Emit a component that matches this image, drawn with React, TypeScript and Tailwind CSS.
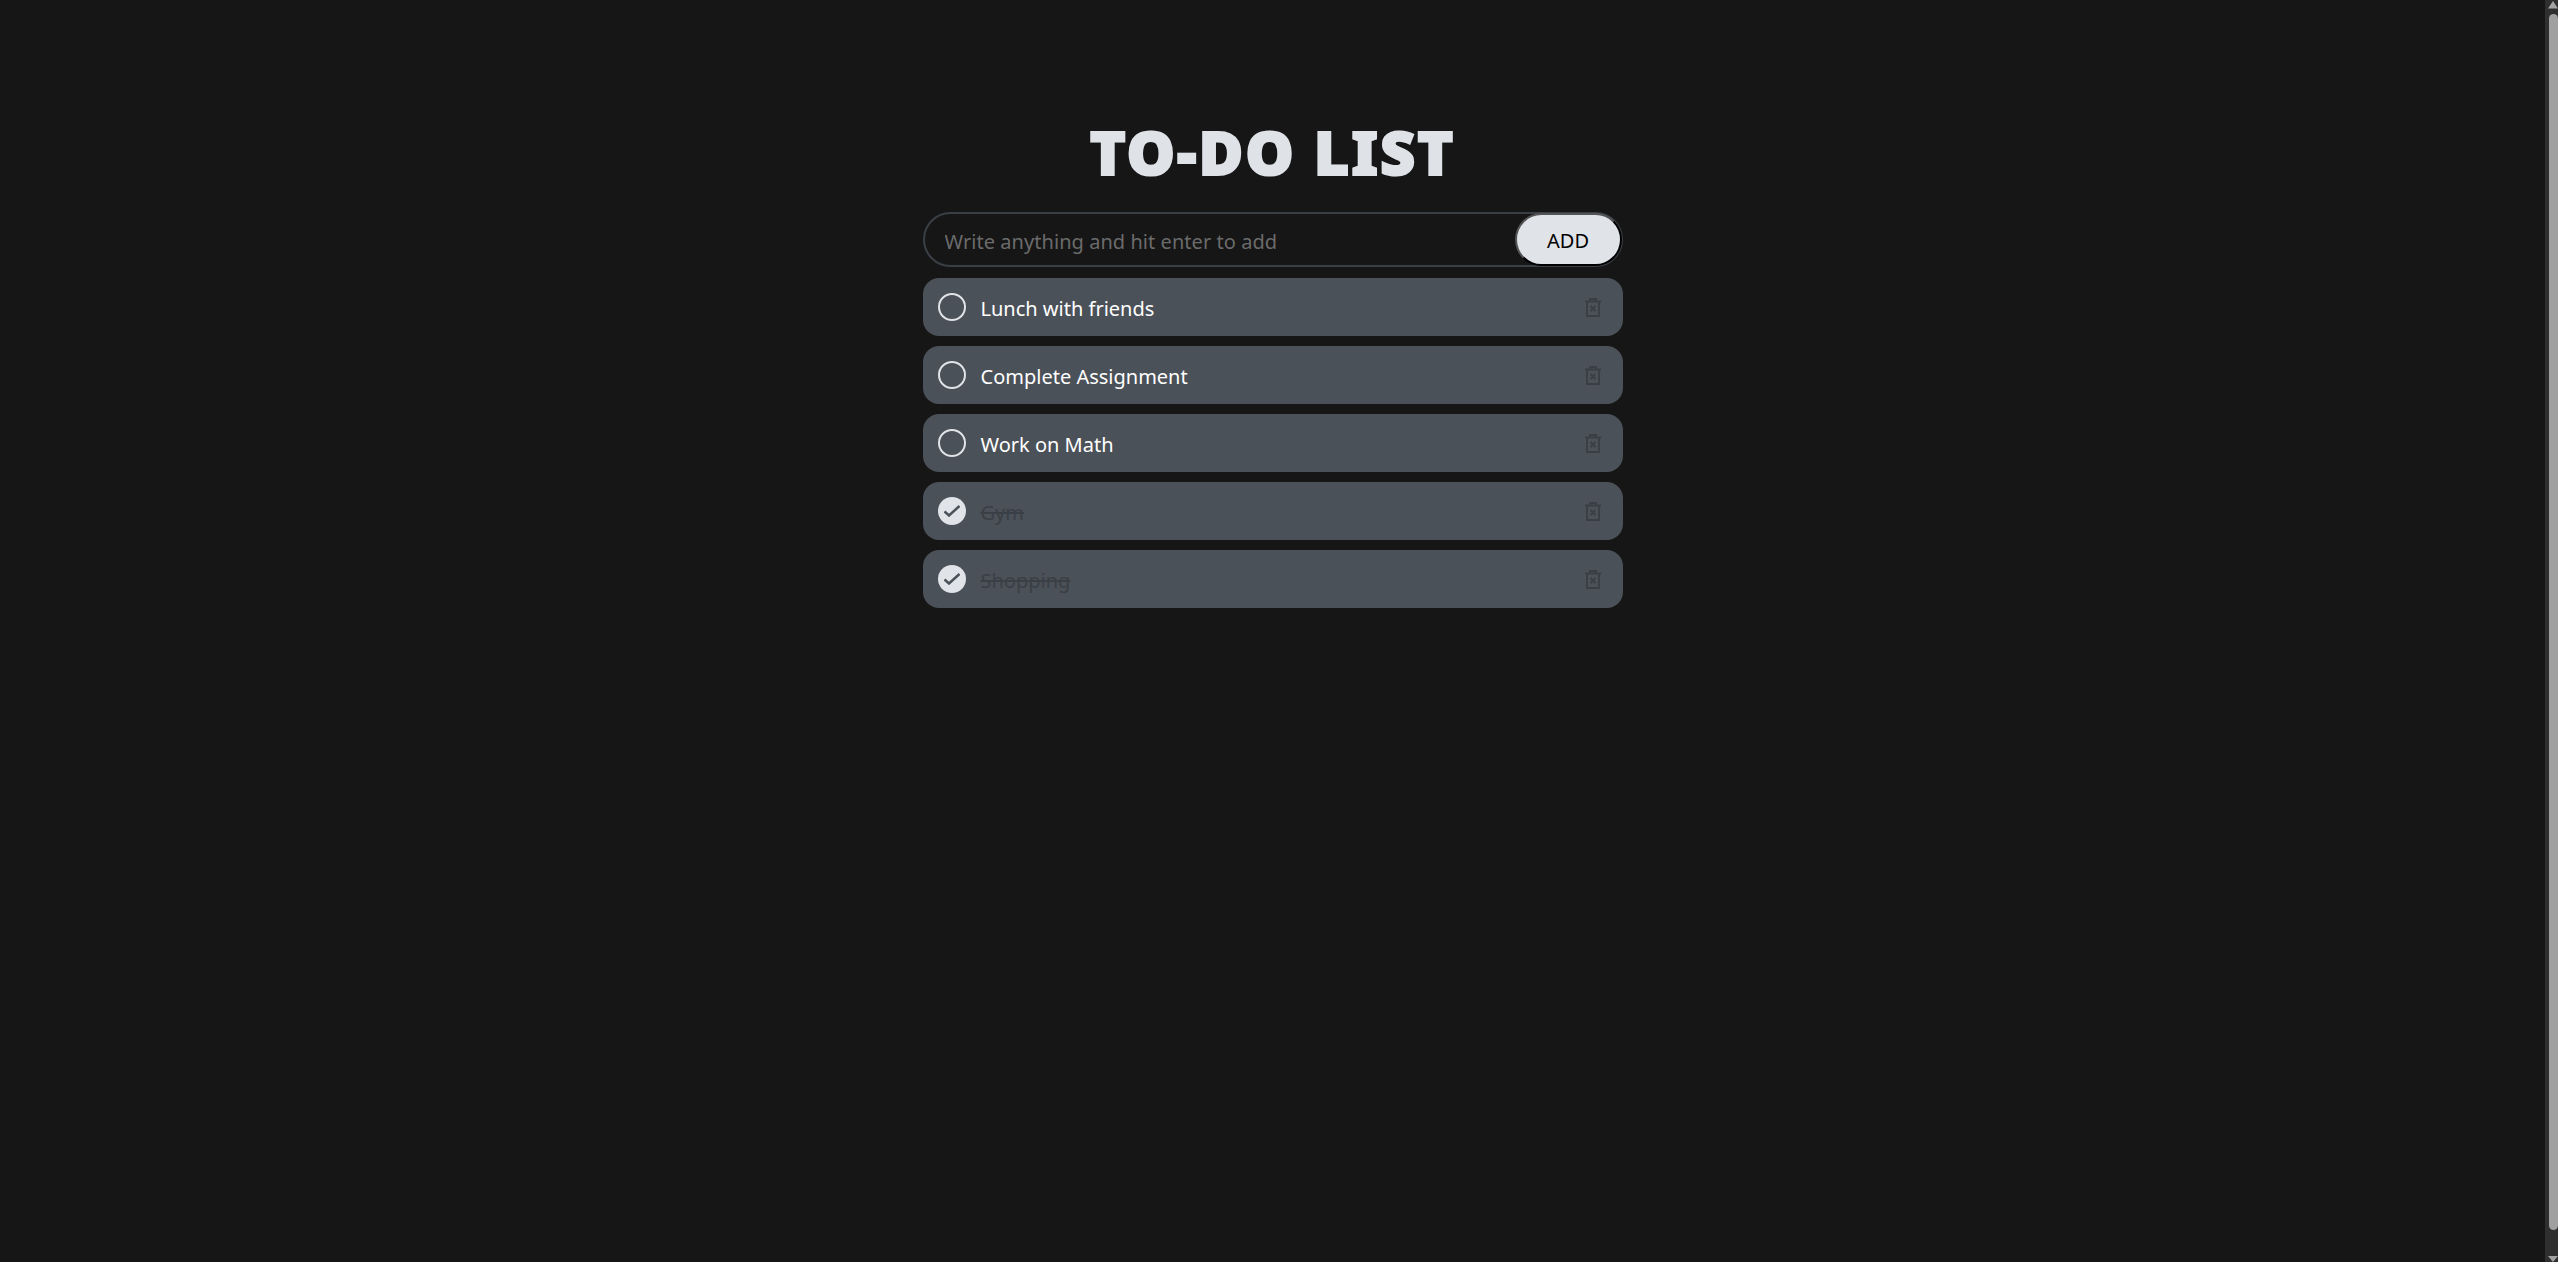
const rows = [
  { text: "Lunch with friends", done: false },
  { text: "Complete Assignment", done: false },
  { text: "Work on Math", done: false },
  { text: "Gym", done: true },
  { text: "Shopping", done: true },
];

function Trash() {
  return (
    <svg width="16" height="19" viewBox="0 0 16 19" fill="none" stroke="#3a3f46" strokeWidth="2" className="block">
      <path d="M0 3.500h16" />
      <path d="M5 3V1h6v2" />
      <path d="M2 4v14h12V4" />
      <path d="M5.500 8l5 5M10.500 8l-5 5" />
    </svg>
  );
}

function Scrollbar() {
  return (
    <div className="w-[13px] h-screen bg-[#2f2f2f] flex flex-col items-center shrink-0">
      <svg width="10" height="8" viewBox="0 0 10 8" className="mt-px ml-[3px] shrink-0">
        <path d="M5 0L10 7.500H0z" fill="#a3a3a3" />
      </svg>
      <div className="w-[9px] ml-[3px] mt-[5px] h-[1216px] rounded-t-[5px] rounded-b-[5px] bg-[#a0a0a0] shrink-0" />
      <svg width="10" height="6" viewBox="0 0 10 6" className="mt-[26px] ml-[3px] shrink-0">
        <path d="M0 0H10L5 6z" fill="#a3a3a3" />
      </svg>
    </div>
  );
}

export default function App() {
  return (
    <div className="flex h-screen overflow-hidden bg-[#161616] font-['Noto_Sans',sans-serif]">
      <main className="flex-1 flex flex-col items-center pt-[116px]">
        <h1 className="text-[61px] leading-[72px] font-black tracking-[2px] [-webkit-text-stroke:2px_#dfe2e7] text-[#dfe2e7] mb-[24px]">TO-DO LIST</h1>
        <div className="w-[700px]">
          <div className="h-[55px] flex items-center rounded-full border-2 border-[#3a3f46] mb-[11px]">
            <input
              readOnly
              placeholder="Write anything and hit enter to add"
              className="flex-1 min-w-0 bg-transparent pl-[20px] pt-[5px] text-[20px] tracking-[0.05px] outline-none placeholder:text-[#6b6b6b]"
            />
            <button className="w-[107px] h-[53px] shrink-0 -mr-[1px] pt-[3px] rounded-full bg-[#e0e3e8] text-[20px] text-black border-2 border-black [border-style:outset]">ADD</button>
          </div>
          <div className="flex flex-col gap-[10px]">
            {rows.map((r) => (
              <div key={r.text} className="h-[58px] flex items-center rounded-2xl bg-[#4b5158] pl-[15px] pr-[22px]">
                {r.done ? (
                  <span className="w-[28px] h-[28px] rounded-full bg-[#e0e3e8] flex items-center justify-center">
                    <svg width="16" height="12" viewBox="0 0 16 12" fill="none" stroke="#4b5158" strokeWidth="2.500"><path d="M0.500 6.500l4.500 4L15.500 1" /></svg>
                  </span>
                ) : (
                  <span className="w-[28px] h-[28px] rounded-full border-2 border-[#e0e3e8]" />
                )}
                <span className={"ml-[15px] flex-1 pt-[4px] text-[20px] " + (r.done ? "text-[#3a3f46] line-through" : "text-white")}>{r.text}</span>
                <Trash />
              </div>
            ))}
          </div>
        </div>
      </main>
      <Scrollbar />
    </div>
  );
}
